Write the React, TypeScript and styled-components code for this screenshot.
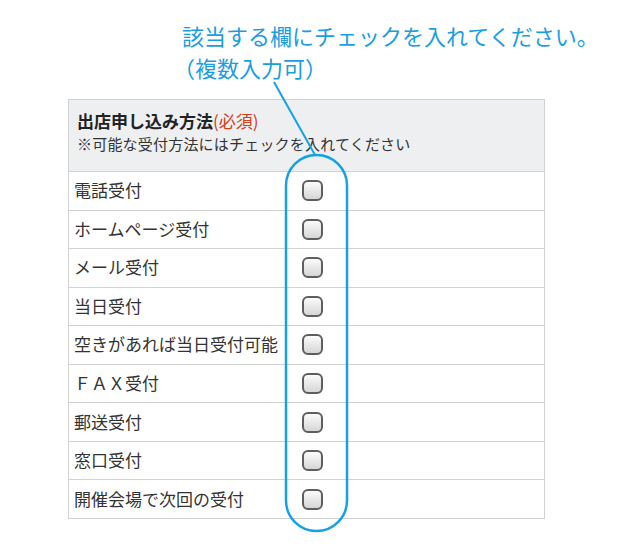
import React from "react";
import styled, { createGlobalStyle } from "styled-components";

const GlobalStyle = createGlobalStyle`
  html, body { margin: 0; padding: 0; background: #ffffff; }
  body {
    font-family: "Noto Sans CJK JP", "Noto Sans", sans-serif;
    width: 620px;
    height: 551px;
    overflow: hidden;
  }
`;

const Page = styled.div`
  position: relative;
  width: 620px;
  height: 551px;
  padding-top: 19px;
  box-sizing: border-box;
`;

const Note = styled.div`
  padding-left: 182px;
  color: #1b9de2;
  font-size: 22px;
  font-weight: 400;
  line-height: 32px;
`;

const NoteLine = styled.div<{ $indent?: number }>`
  text-indent: ${(p) => p.$indent ?? 0}px;
  white-space: nowrap;
`;

const Table = styled.div`
  margin: 16px 0 0 68px;
  width: 477px;
  border: 1px solid #d2d2d2;
  border-bottom: none;
  box-sizing: border-box;
`;

const Header = styled.div`
  height: 72px;
  box-sizing: border-box;
  background: #eeeff0;
  border-bottom: 1px solid #d2d2d2;
  padding: 9px 0 0 8px;
`;

const Title = styled.div`
  font-size: 17px;
  line-height: 24px;
  font-weight: 700;
  color: #222;
`;

const Required = styled.span`
  font-weight: 400;
  color: #d2401a;
`;

const Sub = styled.div`
  font-size: 15px;
  line-height: 22px;
  color: #333;
  letter-spacing: 0.2px;
`;

const Row = styled.div`
  display: grid;
  grid-template-columns: 233px 1fr;
  align-items: center;
  height: 38.55px;
  box-sizing: border-box;
  border-bottom: 1px solid #d2d2d2;
`;

const Label = styled.div`
  padding-left: 5px;
  padding-bottom: 2px;
  font-size: 17px;
  color: #333;
  white-space: nowrap;
`;

const Box = styled.span`
  display: block;
  width: 21px;
  height: 21px;
  box-sizing: border-box;
  border: 2px solid #5e5e5e;
  border-radius: 6px;
  background: linear-gradient(#fbfbfb, #d6d6d6);
`;

const Overlay = styled.svg`
  position: absolute;
  left: 0;
  top: 0;
  pointer-events: none;
`;

const items = [
  "電話受付",
  "ホームページ受付",
  "メール受付",
  "当日受付",
  "空きがあれば当日受付可能",
  "ＦＡＸ受付",
  "郵送受付",
  "窓口受付",
  "開催会場で次回の受付",
];

export default function App() {
  return (
    <>
      <GlobalStyle />
      <Page>
        <Note>
          <NoteLine>該当する欄にチェックを入れてください。</NoteLine>
          <NoteLine $indent={-9}>（複数入力可）</NoteLine>
        </Note>
        <Table>
          <Header>
            <Title>
              出店申し込み方法<Required>(必須)</Required>
            </Title>
            <Sub>※可能な受付方法にはチェックを入れてください</Sub>
          </Header>
          {items.map((t) => (
            <Row key={t}>
              <Label>{t}</Label>
              <Box />
            </Row>
          ))}
        </Table>
        <Overlay width="620" height="551" viewBox="0 0 620 551">
          <line x1="274" y1="82" x2="315" y2="155" stroke="#14a2e6" strokeWidth="2" />
          <rect
            x="286"
            y="155"
            width="61"
            height="376"
            rx="30.5"
            ry="30.5"
            fill="none"
            stroke="#14a2e6"
            strokeWidth="2.5"
          />
        </Overlay>
      </Page>
    </>
  );
}
